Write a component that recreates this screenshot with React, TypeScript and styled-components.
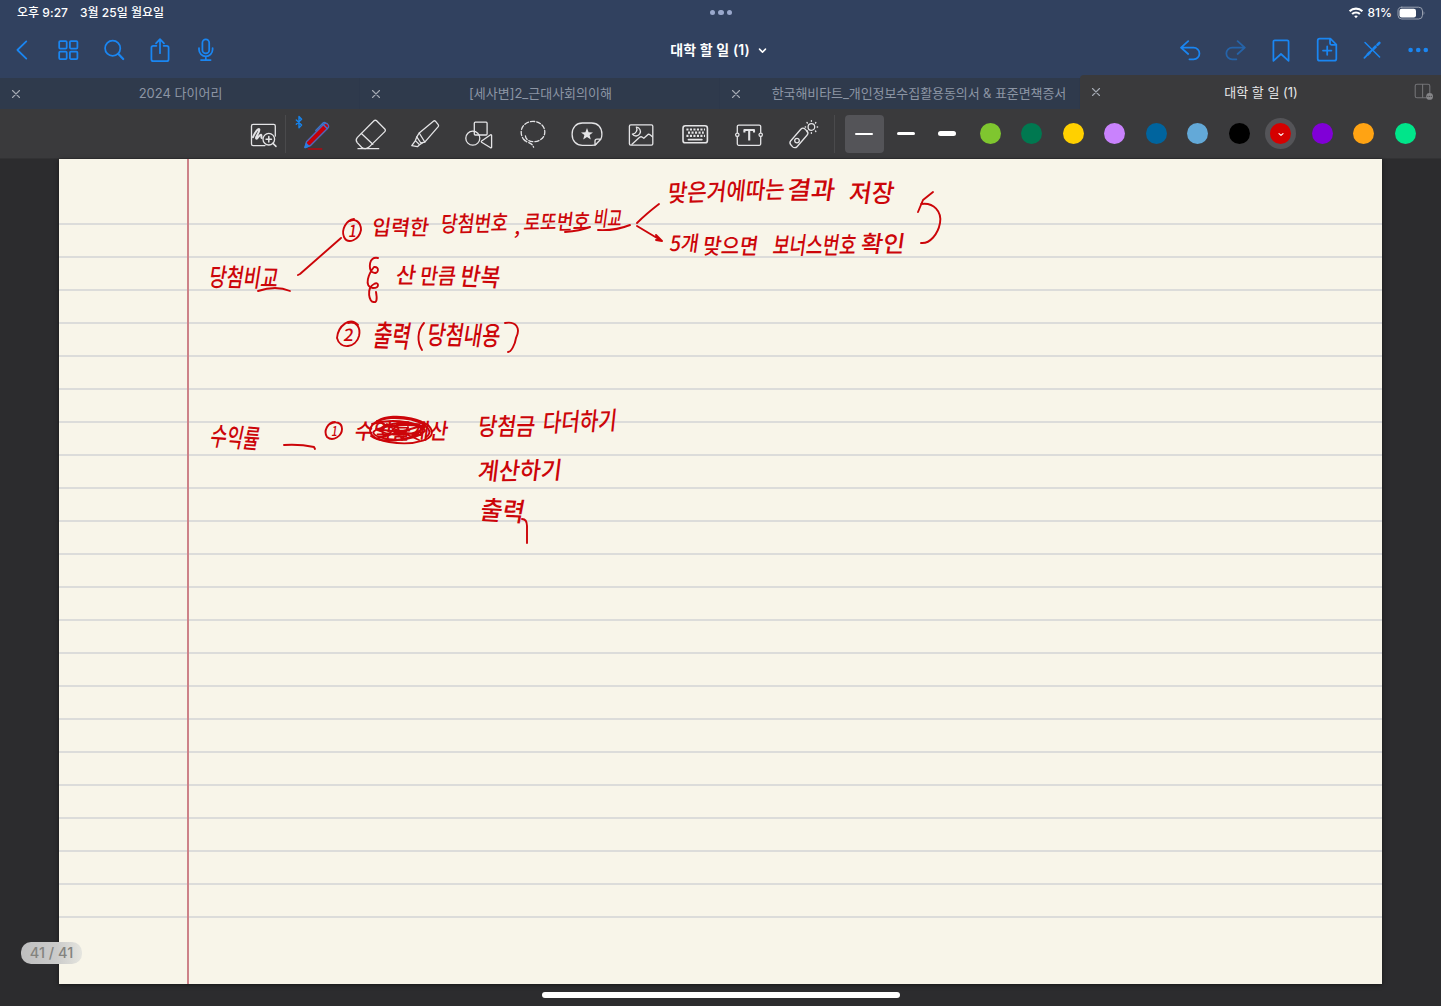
import React from "react";
import styled, { createGlobalStyle } from "styled-components";

const GlobalStyle = createGlobalStyle`
  body { margin: 0; background: #2c2c2e; }
  * { box-sizing: border-box; }
`;

const BLUE = "#1a86f2";
const INK = "#cc0509";

const Screen = styled.div`
  width: 1441px;
  height: 1006px;
  display: flex;
  flex-direction: column;
  overflow: hidden;
  background: #2c2c2e;
  color: #fff;
  font-family: Inter, "Noto Sans CJK KR", sans-serif;
`;

const Header = styled.header`
  height: 109px;
  display: flex;
  flex-direction: column;
  background: #31415f;
`;

const StatusBar = styled.div`
  height: 25px;
  display: grid;
  grid-template-columns: 1fr auto 1fr;
  align-items: center;
  padding: 0 16px 0 17px;
  font-size: 12px;
  font-weight: 500;
  line-height: 25px;
`;

const StatusLeft = styled.div`
  display: flex;
  gap: 12px;
  letter-spacing: 0.03px;
`;

const StatusRight = styled.div`
  display: flex;
  justify-content: flex-end;
  align-items: center;
  gap: 4px;
`;

const Battery = styled.span`
  display: flex;
  margin-left: 1px;
`;

const Dots = styled.div`
  display: flex;
  gap: 3px;
`;

const Dot = styled.i`
  width: 5.3px;
  height: 5.3px;
  border-radius: 50%;
  background: #9aa8cc;
`;

const NavBar = styled.nav`
  height: 50px;
  display: grid;
  grid-template-columns: 274px 1fr 274px;
  align-items: center;
`;

const NavLeft = styled.div`
  display: grid;
  grid-template-columns: repeat(5, 46px);
  margin-left: -1px;
`;

const NavRight = styled.div`
  display: grid;
  grid-template-columns: repeat(6, 1fr);
`;

const IconButton = styled.button<{ $dim?: boolean }>`
  display: flex;
  align-items: center;
  justify-content: center;
  padding: 0;
  border: 0;
  background: none;
  color: ${BLUE};
  opacity: ${(p) => (p.$dim ? 0.5 : 1)};
`;

const DocTitle = styled.h1`
  margin: 0;
  display: flex;
  align-items: center;
  justify-content: center;
  gap: 8px;
  padding-right: 4px;
  font-size: 14px;
  line-height: 20px;
  font-weight: 600;
  letter-spacing: 0.1px;
`;

const TabBar = styled.div`
  height: 34px;
  display: flex;
  align-items: flex-end;
`;

const Tab = styled.div<{ $active?: boolean }>`
  width: 360px;
  flex: ${(p) => (p.$active ? "1" : "none")};
  height: ${(p) => (p.$active ? 34 : 31)}px;
  display: flex;
  align-items: center;
  background: ${(p) => (p.$active ? "#3a3a3c" : "#2f3a4c")};
  border-radius: ${(p) => (p.$active ? "4px 0 0 0" : "0")};
  box-shadow: ${(p) => (p.$active ? "none" : "inset -1px 0 #2d384b")};
  color: ${(p) => (p.$active ? "#e6e6e8" : "#8c95a4")};
`;

const TabClose = styled.span`
  width: 31px;
  flex: none;
  display: flex;
  justify-content: center;
  color: #a4a9b2;
`;

const TabTitle = styled.span<{ $long?: boolean }>`
  flex: 1;
  text-align: center;
  white-space: nowrap;
  font-size: 13px;
  line-height: 20px;
  padding-left: ${(p) => (p.$long ? 7 : 0)}px;
  padding-bottom: 1px;
  letter-spacing: ${(p) => (p.$long ? -0.08 : 0)}px;
`;

const TabEnd = styled.span`
  width: 30px;
  flex: none;
  display: flex;
  justify-content: center;
`;

const Toolbar = styled.div`
  height: 50px;
  flex: none;
  display: flex;
  align-items: center;
  padding-left: 243px;
  background: #3a3a3c;
  border-bottom: 1px solid #323234;
`;

const ToolSlot = styled.div<{ $w: number }>`
  width: ${(p) => p.$w}px;
  flex: none;
  display: flex;
  justify-content: center;
  color: #e4e4e6;
`;

const Divider = styled.div<{ $left?: number; $right?: number }>`
  width: 1px;
  height: 38px;
  flex: none;
  background: #4a4a4c;
  margin-left: ${(p) => p.$left ?? 0}px;
  margin-right: ${(p) => p.$right ?? 0}px;
`;

const StrokeChoice = styled.div<{ $on?: boolean }>`
  width: 38.5px;
  height: 38px;
  margin: 0 1.5px;
  flex: none;
  display: flex;
  align-items: center;
  justify-content: center;
  border-radius: 4px;
  background: ${(p) => (p.$on ? "#545458" : "transparent")};
`;

const StrokeLine = styled.span<{ $h: number }>`
  width: 18px;
  height: ${(p) => p.$h}px;
  border-radius: 3px;
  background: #fff;
`;

const Palette = styled.div`
  display: flex;
  margin-left: 1.5px;
`;

const SwatchSlot = styled.div`
  width: 41.5px;
  height: 38px;
  display: flex;
  align-items: center;
  justify-content: center;
`;

const Swatch = styled.span<{ $c: string; $on?: boolean }>`
  width: 21px;
  height: 21px;
  flex: none;
  display: flex;
  align-items: center;
  justify-content: center;
  border-radius: 50%;
  background: ${(p) => p.$c};
  box-shadow: ${(p) => (p.$on ? "0 0 0 5px #545458" : "none")};
`;

const Canvas = styled.main`
  position: relative;
  height: 847px;
  padding: 0 59px;
`;

const Paper = styled.section`
  position: relative;
  width: 1323px;
  height: 825px;
  padding-top: 33px;
  background: #f8f5e9;
  box-shadow: 0 1px 4px rgba(0, 0, 0, 0.5);
`;

const Rule = styled.div`
  height: 33px;
  border-bottom: 2px solid #dcdcda;
`;

const Margin = styled.div`
  position: absolute;
  top: 0;
  bottom: 0;
  left: 128px;
  width: 2px;
  background: #cd8288;
`;

const Ink = styled.svg`
  position: absolute;
  left: 0;
  top: 0;
  fill: none;
  stroke: ${INK};
  stroke-width: 1.9;
  stroke-linecap: round;
  stroke-linejoin: round;
`;

const Handwriting = styled.text`
  fill: ${INK};
  stroke: none;
  font-family: "Noto Sans CJK KR", sans-serif;
  font-weight: 500;
`;

const PageBadge = styled.div`
  position: absolute;
  left: 21px;
  top: 783px;
  width: 61px;
  height: 22px;
  border-radius: 10px;
  background: linear-gradient(90deg, #bebebf 0%, #cbcbca 58%, #e5e5df 100%);
  color: #83837f;
  font-size: 14.5px;
  font-weight: 500;
  line-height: 22px;
  text-align: center;
`;

const HomeIndicator = styled.div`
  width: 358px;
  height: 6px;
  margin: 8px auto 0;
  border-radius: 3px;
  background: #fff;
`;

const Glyph = styled.svg`
  display: block;
  flex: none;
  fill: none;
  stroke: currentColor;
  stroke-linecap: round;
  stroke-linejoin: round;
`;

/* Icons are drawn around the origin, one unit per pixel. */
function Icon({ w = 44, h = 40, sw = 1.75, children }: { w?: number; h?: number; sw?: number; children: React.ReactNode }) {
  return (
    <Glyph width={w} height={h} viewBox={`${-w / 2} ${-h / 2} ${w} ${h}`} strokeWidth={sw}>
      {children}
    </Glyph>
  );
}

const Close = () => (
  <Icon w={12} h={12} sw={1.1}>
    <path d="M-3.5-3.5 3.5 3.5M3.5-3.5-3.5 3.5" />
  </Icon>
);

const leftNav = [
  <path d="M4.3-8.6-4.6 0 4.3 8.6" />,
  <>
    <rect x="-8.8" y="-9" width="7.5" height="7.5" rx="1" />
    <rect x="1.9" y="-9" width="7.5" height="7.5" rx="1" />
    <rect x="-8.8" y="1.5" width="7.5" height="7.5" rx="1" />
    <rect x="1.9" y="1.5" width="7.5" height="7.5" rx="1" />
  </>,
  <>
    <circle cx="-1.3" cy="-1.7" r="7.6" />
    <path d="M4.2 3.8 9.2 9" strokeWidth="2.2" />
  </>,
  <>
    <path d="M-3.6-4.2H-6.6a2 2 0 0 0-2 2V9.2a2 2 0 0 0 2 2H6.6a2 2 0 0 0 2-2V-2.2a2 2 0 0 0-2-2H3.6" />
    <path d="M0 3.2V-10.4M-4-6.6 0-10.8 4-6.6" />
  </>,
  <>
    <rect x="-3.6" y="-10.6" width="6.8" height="14" rx="3.4" />
    <path d="M-7-2V-.5a6.8 6.8 0 0 0 13.6 0V-2M-.2 6.3V9.6M-5 10H4.6" />
  </>,
];

const rightNav = [
  <path d="M-1.8-8.8-9-2.4-1.8 4M-8.6-2.4H3.6a5.8 5.8 0 0 1 0 11.7H-.6" />,
  <path d="M2.6-8.8 9.8-2.4 2.6 4M9.4-2.4H-2.8a5.8 5.8 0 0 0 0 11.7H1.4" />,
  <path d="M-7.6 10.8V-8.3a1.4 1.4 0 0 1 1.4-1.4H6.2a1.4 1.4 0 0 1 1.4 1.4V10.8L0 4Z" />,
  <>
    <path d="M3.4-11.3H-7.3a2 2 0 0 0-2 2V8.7a2 2 0 0 0 2 2H7.3a2 2 0 0 0 2-2V-5.5ZM3-11V-6.8A1.6 1.6 0 0 0 4.6-5.2H9" />
    <path d="M-4 .6H4.4M.2-3.6V4.8" />
  </>,
  <>
    <path d="M-7-7.5 7.6 7" strokeWidth="1.5" />
    <path d="M-4.9 5.1-1.8 2M1.2-1 4.2-4" strokeWidth="2.6" strokeLinecap="butt" />
    <path d="M-7.6 7.8-4.9 5.1M-1.8 2 1.2-1" strokeWidth="1.8" />
    <path d="M5.4-5.2 7.4-7.2" strokeWidth="2.6" />
  </>,
  <g fill="currentColor" stroke="none">
    <circle cx="-7.4" r="2.3" />
    <circle cx=".2" r="2.3" />
    <circle cx="7.8" r="2.3" />
  </g>,
];

const ZoomWrite = () => (
  <Icon sw={1.3} w={44}>
    <path d="M11.3 2V-8a1.6 1.6 0 0 0-1.6-1.6H-10.9A1.6 1.6 0 0 0-12.5-8V10a1.6 1.6 0 0 0 1.6 1.6H1" />
    <path d="M-11 3.2C-9.4-1.2-5.8-6-4.7-4.6-3.6-3.2-9.4 3.8-7.6 4.7-6.4 5.3-4.7.2-3 .8-1.9 1.2-3.2 3.5-2.3 4" strokeWidth="2" />
    <circle cx="4.8" cy="5.2" r="5.8" />
    <path d="M2.1 5.2H7.5M4.8 2.5V7.9M9 9.4 12 12.4" strokeWidth="1.5" />
  </Icon>
);

const tools = [
  <>
    <g stroke="#287ede" strokeWidth="1.4">
      <path d="M-12 13.5-10.5 7.8 6.7-9.8a2.6 2.6 0 0 1 4 0 2.6 2.6 0 0 1 0 4L-6.5 11.5Z" fill="#c4000b" stroke="#5268b8" />
      <path d="M-12 13.5-10.8 9.6-8.2 12.2Z" fill="#287ede" />
      <path d="M-1.2-3.6 5.8-10.8Q7-12 8.4-11.2M6.2-9.4 10.2-5.4" fill="none" stroke="#3a76cc" />
    </g>
    <path d="M-8.5 15H4.8" stroke="#b30910" strokeWidth="1.3" />
    <path d="M-20.7-14-15.4-9-18-6.2V-17.6L-15.4-14.8-20.7-9.8" stroke="#1684ed" strokeWidth="1.4" />
  </>,
  <>
    <path d="M-13.8 3.6 3-13.2a1.8 1.8 0 0 1 2.6 0L13.8-5a1.8 1.8 0 0 1 0 2.6L-2 13.1Q-3.8 14.6-5.6 14.6-8 14.6-9.4 13.2L-13.8 8.6Q-15.8 6-13.8 3.6Z" />
    <path d="M-9.6-.5 1.8 10.2M-13 14.7H7.7" />
  </>,
  <>
    <path d="M-8.2 2.8-5.8-1 8.4-12.8a1.6 1.6 0 0 1 2.2.2L13.2-9.4a1.6 1.6 0 0 1 0 2L-.2 8.2-4.2 9Z" />
    <path d="M-8.2 2.8-9.6 6.6-5.4 10.8-2.4 8.7M-5.8-1-.2 8M-9.6 6.6-13.2 11.7-7.6 12.7-5.4 10.8" />
  </>,
  <>
    <rect x="-4.7" y="-11.8" width="12.8" height="12.8" rx="1" />
    <circle cx="-6.2" cy="4.2" r="7" />
    <path d="M12.6 1.4V13.2a.7.7 0 0 1-1 .6L2.6 8.2a.8.8 0 0 1 0-1.2L11.6.8a.7.7 0 0 1 1 .6Z" />
  </>,
  <>
    <path d="M-8 6.8A11.6 11.6 0 0 1-11.8-2C-11.8-8-6.5-12.6 0-12.6S11.8-8 11.8-2 6.6 7.7 0 7.7C-4.5 7.7-7.6 4.8-7.6 1.6M-9.4 5.2C-6.4 9.3-1.3 7.8.6 13.2" strokeDasharray="4.2 2" />
  </>,
  <>
    <path d="M9.4 10.2Q7.2 11.4 4.6 11.4H-4.6C-10.8 11.4-14.9 6.9-14.9.2S-10.8-11-4.6-11H4.6C10.8-11 14.9-6.8 14.9.2Q14.9 3 13.8 5.2L8 11.2V7.2A2 2 0 0 1 10 5.2H13.8" />
    <path d="M0-6 1.6-1.8 6-1.6 2.6 1.1 3.8 5.4 0 2.9-3.8 5.4-2.6 1.1-6-1.6-1.6-1.8Z" fill="currentColor" stroke="none" />
  </>,
  <>
    <rect x="-11.6" y="-9.2" width="23.4" height="20.4" rx="1.4" />
    <path d="M-4.6-6.8A4.4 4.4 0 1 1-8.6.1 4.8 4.8 0 0 0-4.6-6.8ZM-9 10.2-1.4 3.3Q0 2.2 1.4 3.2L2.8 4.3 7 .4Q8 0 9 .8L11.4 2.8" />
  </>,
  <>
    <rect x="-12" y="-8.2" width="24.4" height="17" rx="2.4" strokeWidth="1.6" />
    <path d="M-8.6-4.5H10M-7-1.3H8.8M-8.6 1.9H10" strokeWidth="2.2" strokeDasharray="2.1 1.4" strokeLinecap="butt" />
    <path d="M-6.5 5.6H6.8" strokeWidth="1.8" />
  </>,
  <>
    <path d="M-11.7-1.5V-7.4A1.5 1.5 0 0 1-10.2-8.9H10.2a1.5 1.5 0 0 1 1.5 1.5V-1.5M11.7 3V9.8a1.5 1.5 0 0 1-1.5 1.5H-10.2A1.5 1.5 0 0 1-11.7 9.8V3" />
    <circle cx="-11.7" cy=".8" r="1.7" />
    <circle cx="11.7" cy=".8" r="1.7" />
    <path d="M-4.6-1.6V-4H5V-1.6M.2-3.7V6.4" strokeWidth="2.1" strokeLinecap="butt" />
  </>,
  <>
    <path d="M-12.2 6.7-2.2-4.7a3 3 0 0 1 4.2-.2L3.9-3a3 3 0 0 1 .1 4.2L-6 12.7a3 3 0 0 1-4.3.2L-12 11a3.2 3.2 0 0 1-.2-4.3Z" />
    <circle cx="-6" cy="6.6" r="2.3" />
    <circle cx="8.4" cy="-7" r="3.3" />
    <path d="M8.4-13.2V-12.8M8.4-1.2V-.8M2.2-7H2.6M14.2-7H14.6M4-11.4 4.3-11.1M12.5-2.9 12.8-2.6M12.5-11.1 12.8-11.4M4-2.6 4.3-2.9" strokeWidth="1.4" />
  </>,
];

const colors = ["#7fc62f", "#007850", "#ffd000", "#c982fd", "#00649e", "#63a9d8", "#000000", "#d50000", "#8000d7", "#ffa313", "#00e58a"];

type Word = { t: string; x: number; y: number; w: number; s: number; r?: number };

const words: Word[] = [
  { t: "당첨비교", x: 208, y: 286, w: 69, s: 25, r: 1 },
  { t: "1", x: 348, y: 237, w: 8, s: 17 },
  { t: "입력한", x: 371, y: 235, w: 57, s: 21 },
  { t: "당첨번호", x: 440, y: 232, w: 67, s: 22, r: -1 },
  { t: ",", x: 514, y: 234, w: 6, s: 20 },
  { t: "로또번호", x: 523, y: 230, w: 66, s: 21, r: -1 },
  { t: "비교", x: 593, y: 226, w: 28, s: 21 },
  { t: "맞은거에따는", x: 667, y: 202, w: 117, s: 24, r: -2 },
  { t: "결과", x: 786, y: 199, w: 48, s: 25 },
  { t: "저장", x: 848, y: 202, w: 45, s: 25 },
  { t: "5개", x: 669, y: 251, w: 29, s: 21 },
  { t: "맞으면", x: 702, y: 254, w: 55, s: 22 },
  { t: "보너스번호", x: 772, y: 254, w: 83, s: 24 },
  { t: "확인", x: 860, y: 252, w: 44, s: 23 },
  { t: "산", x: 395, y: 283, w: 20, s: 22 },
  { t: "만큼", x: 419, y: 284, w: 36, s: 22 },
  { t: "반복", x: 459, y: 285, w: 40, s: 25, r: 2 },
  { t: "2", x: 343, y: 341, w: 10, s: 17 },
  { t: "출력", x: 372, y: 346, w: 37, s: 30, r: 2 },
  { t: "당첨내용", x: 426, y: 344, w: 73, s: 26, r: 1 },
  { t: "수익률", x: 209, y: 445, w: 49, s: 26, r: 4 },
  { t: "1", x: 331, y: 436, w: 6, s: 14 },
  { t: "수익률계산", x: 354, y: 439, w: 93, s: 22 },
  { t: "당첨금", x: 477, y: 435, w: 57, s: 24 },
  { t: "다더하기", x: 542, y: 432, w: 74, s: 25, r: -2 },
  { t: "계산하기", x: 477, y: 480, w: 84, s: 24, r: -1 },
  { t: "출력", x: 479, y: 519, w: 44, s: 26, r: 3 },
];

const strokes = [
  "M258 291Q276 285 290 291",
  "M298 275 300 274 341 238",
  "M354 219C346 220 341 230 344 237 348 245 359 240 361 230 361 222 355 218 350 221",
  "M598 230Q615 231 630 225",
  "M565 232Q580 231 590 227",
  "M659 204Q646 214 637 223M637 226 662 241M662 241 656 235M662 241 656 240",
  "M933 192 923 200 918 212M921 204C934 202 942 212 940 223 938 234 930 244 921 243",
  "M378 258C368 256 369 269 372 272 379 276 380 266 374 267 369 273 363 287 373 288 380 288 379 281 374 284 366 288 369 303 374 302Q378 303 376 292",
  "M358 325C350 316 338 326 337 338 340 350 356 348 359 336 361 327 356 321 348 323",
  "M424 323C417 331 417 342 422 350",
  "M505 323C516 321 521 328 516 338 515 345 511 352 508 352",
  "M284 445Q300 444 314 447L315 449",
  "M335 422C328 422 323 431 327 437 333 442 342 436 342 429 342 422 335 421 330 424",
  "M370 431C373 413 409 413 428 425 443 440 412 446 389 442 361 438 366 420 391 418 420 417 437 430 426 437",
  "M372 424C395 417 424 424 425 431 411 444 379 440 374 434 369 428 399 423 421 426M371 436C385 447 427 436 420 427 405 419 378 425 380 431 395 438 417 435 425 427M376 429 421 435M377 421 419 440M378 438 425 425M387 424C378 430 384 442 390 433L397 425 402 440 408 427",
  "M522 519Q527 519 527 526V543",
];

export default function App() {
  return (
    <Screen>
      <GlobalStyle />
      <Header>
        <StatusBar>
          <StatusLeft>
            <span>오후 9:27</span>
            <span>3월 25일 월요일</span>
          </StatusLeft>
          <Dots>
            <Dot />
            <Dot />
            <Dot />
          </Dots>
          <StatusRight>
            <Icon w={16} h={14} sw={2.1}>
              <path d="M-6.4-1.8A9.2 9.2 0 0 1 6.4-1.8M-3.9 1.1A5.5 5.5 0 0 1 3.9 1.1" strokeLinecap="butt" />
              <path d="M-1.9 3.1Q0 1.8 1.9 3.1L0 5.2Z" fill="currentColor" stroke="none" />
            </Icon>
            <span>81%</span>
            <Battery>
              <Icon w={28} h={14} sw={1}>
                <rect x="-13" y="-5.8" width="24.5" height="11.8" rx="3.8" stroke="#98a0b0" />
                <rect x="-11.5" y="-4.2" width="16.5" height="8.6" rx="2.2" fill="#fff" stroke="none" />
                <path d="M12.6-1.7Q14.2 0 12.6 1.9Z" fill="#98a0b0" stroke="none" />
              </Icon>
            </Battery>
          </StatusRight>
        </StatusBar>
        <NavBar>
          <NavLeft>
            {leftNav.map((g, i) => (
              <IconButton key={i}>
                <Icon>{g}</Icon>
              </IconButton>
            ))}
          </NavLeft>
          <DocTitle>
            대학 할 일 (1)
            <Icon w={9} h={9} sw={1.5}>
              <path d="M-3-1.4 0 1.6 3-1.4" />
            </Icon>
          </DocTitle>
          <NavRight>
            {rightNav.map((g, i) => (
              <IconButton key={i} $dim={i === 1}>
                <Icon>{g}</Icon>
              </IconButton>
            ))}
          </NavRight>
        </NavBar>
        <TabBar>
          <Tab>
            <TabClose><Close /></TabClose>
            <TabTitle>2024 다이어리</TabTitle>
            <TabEnd />
          </Tab>
          <Tab>
            <TabClose><Close /></TabClose>
            <TabTitle>[세사변]2_근대사회의이해</TabTitle>
            <TabEnd />
          </Tab>
          <Tab>
            <TabClose><Close /></TabClose>
            <TabTitle $long>한국해비타트_개인정보수집활용동의서 &amp; 표준면책증서</TabTitle>
          </Tab>
          <Tab $active>
            <TabClose><Close /></TabClose>
            <TabTitle>대학 할 일 (1)</TabTitle>
            <TabEnd>
              <Icon w={24} h={20} sw={1.1}>
                <g stroke="#737376">
                  <path d="M2.6 5.8H-9A1.8 1.8 0 0 1-10.8 4V-6A1.8 1.8 0 0 1-9-7.8H2A1.8 1.8 0 0 1 3.8-6V1M-3.4-7.6V5.6" />
                  <circle cx="3.6" cy="4.4" r="3.4" fill="#858588" stroke="none" />
                  <path d="M1.8 4.4H5.4" stroke="#4a4a4c" strokeDasharray=".1 1.7" />
                </g>
              </Icon>
            </TabEnd>
          </Tab>
        </TabBar>
      </Header>
      <Toolbar>
        <ToolSlot $w={42}><ZoomWrite /></ToolSlot>
        <Divider $right={4} />
        {tools.map((g, i) => (
          <ToolSlot key={i} $w={54}>
            <Icon w={46} sw={1.3}>{g}</Icon>
          </ToolSlot>
        ))}
        <Divider $left={4} $right={8.5} />
        {[2, 3.4, 5.4].map((h, i) => (
          <StrokeChoice key={h} $on={i === 0}>
            <StrokeLine $h={h} />
          </StrokeChoice>
        ))}
        <Palette>
          {colors.map((c) => (
            <SwatchSlot key={c}>
              <Swatch $c={c} $on={c === "#d50000"}>
                {c === "#d50000" && (
                  <Icon w={8} h={8} sw={1.2}>
                    <path d="M-2-.4 0 1.4 2-.4" />
                  </Icon>
                )}
              </Swatch>
            </SwatchSlot>
          ))}
        </Palette>
      </Toolbar>
      <Canvas>
        <Paper>
          {Array.from({ length: 22 }, (_, i) => (
            <Rule key={i} />
          ))}
          <Margin />
          <Ink width="1323" height="825" viewBox="59 159 1323 825">
            {words.map((o, i) => (
              <Handwriting
                key={i}
                fontSize={o.s}
                textLength={o.w}
                lengthAdjust="spacingAndGlyphs"
                transform={`translate(${o.x} ${o.y}) rotate(${o.r ?? 0}) skewX(-8)`}
              >
                {o.t}
              </Handwriting>
            ))}
            {strokes.map((d) => (
              <path key={d} d={d} />
            ))}
          </Ink>
        </Paper>
        <HomeIndicator />
        <PageBadge>41 / 41</PageBadge>
      </Canvas>
    </Screen>
  );
}
